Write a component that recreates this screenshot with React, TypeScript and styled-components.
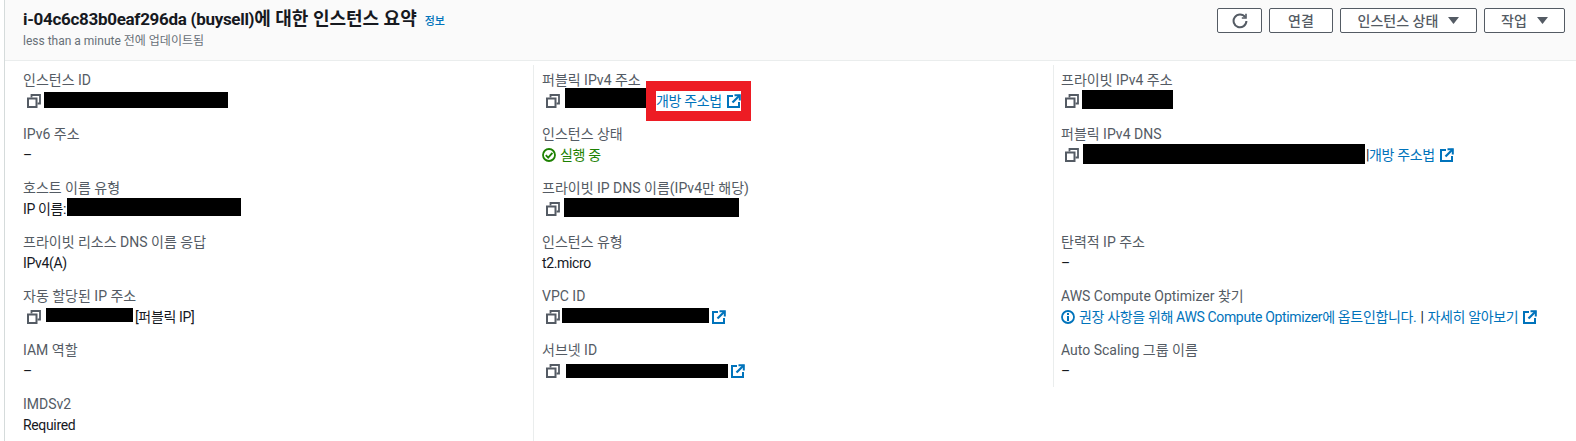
import React from 'react'
import styled, { createGlobalStyle } from 'styled-components'

const GlobalStyle = createGlobalStyle`
  html, body {
    margin: 0;
    padding: 0;
    background: #fff;
    font-family: Roboto, "Noto Sans CJK KR", sans-serif;
    font-size: 14px;
    color: #16191f;
  }
`

const CopyIcon = () => (
  <Svg_Icon width='14' height='14' viewBox='0 0 14 14' fill='none' stroke='#545b64' strokeWidth='2'>
    <rect x='1' y='4.5' width='8.5' height='8.5' />
    <path d='M4.5 3.5V1H13V9.5H10.5' strokeWidth='1.8' />
  </Svg_Icon>
)

const ExternalIcon = () => (
  <Svg_Icon width='14' height='14' viewBox='0 0 14 14' fill='none' stroke='#0073bb' strokeWidth='2'>
    <path d='M6 2H1V13H12V8' />
    <path d='M7.5 1.2H12.8V6.5' />
    <path d='M12.8 1.2L5.5 8.5' strokeWidth='2.2' />
  </Svg_Icon>
)

const RefreshIcon = () => (
  <svg width='16' height='16' viewBox='0 0 16 16' fill='none' stroke='#545b64' strokeWidth='2'>
    <path d='M13.2 4.2A6.4 6.4 0 1 0 14.4 8' />
    <path d='M14 0.8V5H9.8' strokeWidth='1.6' />
  </svg>
)

const Caret = () => (
  <svg width='11' height='7' viewBox='0 0 11 7' fill='#545b64'>
    <path d='M0 0H11L5.5 7Z' />
  </svg>
)

const CheckCircleIcon = () => (
  <Svg_Icon width='14' height='14' viewBox='0 0 14 14' fill='none' stroke='#1d8102' strokeWidth='1.8'>
    <circle cx='7' cy='7' r='6' />
    <path d='M3.8 7.2L6.2 9.6L10.4 4.8' />
  </Svg_Icon>
)

const InfoIcon = () => (
  <Svg_Icon width='14' height='14' viewBox='0 0 14 14' fill='none' stroke='#0073bb' strokeWidth='1.8'>
    <circle cx='7' cy='7' r='6' />
    <path d='M7 6V11M7 3V5' strokeWidth='2' />
  </Svg_Icon>
)

export default function App() {
  return (
    <Div_Page>
      <GlobalStyle />
      <Header_Bar>
        <div>
          <Div_TitleRow>
            <H1_Title>
              <Span_TitleId>i-04c6c83b0eaf296da (buysell)</Span_TitleId>에 대한 인스턴스 요약
            </H1_Title>
            <A_Info>정보</A_Info>
          </Div_TitleRow>
          <P_Updated>less than a minute 전에 업데이트됨</P_Updated>
        </div>
        <Div_Actions>
          <Button_Action $width={45}>
            <RefreshIcon />
          </Button_Action>
          <Button_Action $width={64}>연결</Button_Action>
          <Button_Action $width={137}>
            인스턴스 상태
            <Caret />
          </Button_Action>
          <Button_Action $width={81}>
            작업
            <Caret />
          </Button_Action>
        </Div_Actions>
      </Header_Bar>

      <Div_Columns>
        <Div_Column $divider={false} $padding={18}>
          <Div_Field>
            <Span_Label>인스턴스 ID</Span_Label>
            <Div_Value $indent={4}>
              <CopyIcon />
              <Span_Redacted $width={184} $height={16} $gap={3} $top={1} />
            </Div_Value>
          </Div_Field>
          <Div_Field>
            <Span_Label>IPv6 주소</Span_Label>
            <Div_Value>–</Div_Value>
          </Div_Field>
          <Div_Field>
            <Span_Label>호스트 이름 유형</Span_Label>
            <Div_Value>
              IP 이름:
              <Span_Redacted $width={174} $height={18} $gap={1} $top={-1} />
            </Div_Value>
          </Div_Field>
          <Div_Field>
            <Span_Label>프라이빗 리소스 DNS 이름 응답</Span_Label>
            <Div_Value>IPv4(A)</Div_Value>
          </Div_Field>
          <Div_Field>
            <Span_Label>자동 할당된 IP 주소</Span_Label>
            <Div_Value $indent={4}>
              <CopyIcon />
              <Span_Redacted $width={87} $height={14} $gap={5} $top={1} />
              <Span_Text $gap={2}>[퍼블릭 IP]</Span_Text>
            </Div_Value>
          </Div_Field>
          <Div_Field>
            <Span_Label>IAM 역할</Span_Label>
            <Div_Value>–</Div_Value>
          </Div_Field>
          <Div_Field>
            <Span_Label>IMDSv2</Span_Label>
            <Div_Value>Required</Div_Value>
          </Div_Field>
        </Div_Column>

        <Div_Column $divider $padding={8}>
          <Div_Field>
            <Span_Label>퍼블릭 IPv4 주소</Span_Label>
            <Div_Value $indent={4}>
              <CopyIcon />
              <Span_Redacted $width={81} $height={20} $gap={5} $top={-3} />
              <Div_Highlight>
                <A_Link>개방 주소법</A_Link>
                <ExternalIcon />
              </Div_Highlight>
            </Div_Value>
          </Div_Field>
          <Div_Field>
            <Span_Label>인스턴스 상태</Span_Label>
            <Div_Status>
              <CheckCircleIcon />
              실행 중
            </Div_Status>
          </Div_Field>
          <Div_Field>
            <Span_Label>프라이빗 IP DNS 이름(IPv4만 해당)</Span_Label>
            <Div_Value $indent={4}>
              <CopyIcon />
              <Span_Redacted $width={175} $height={19} $gap={4} $top={-1} />
            </Div_Value>
          </Div_Field>
          <Div_Field>
            <Span_Label>인스턴스 유형</Span_Label>
            <Div_Value>t2.micro</Div_Value>
          </Div_Field>
          <Div_Field>
            <Span_Label>VPC ID</Span_Label>
            <Div_Value $indent={4}>
              <CopyIcon />
              <Span_Redacted $width={147} $height={15} $gap={2} $top={1} />
              <Span_LinkIcon>
                <ExternalIcon />
              </Span_LinkIcon>
            </Div_Value>
          </Div_Field>
          <Div_Field>
            <Span_Label>서브넷 ID</Span_Label>
            <Div_Value $indent={4}>
              <CopyIcon />
              <Span_Redacted $width={162} $height={14} $gap={6} $top={3} />
              <Span_LinkIcon>
                <ExternalIcon />
              </Span_LinkIcon>
            </Div_Value>
          </Div_Field>
        </Div_Column>

        <Div_Column $divider $padding={7} $short>
          <Div_Field>
            <Span_Label>프라이빗 IPv4 주소</Span_Label>
            <Div_Value $indent={4}>
              <CopyIcon />
              <Span_Redacted $width={91} $height={19} $gap={3} $top={-1} />
            </Div_Value>
          </Div_Field>
          <Div_Field>
            <Span_Label>퍼블릭 IPv4 DNS</Span_Label>
            <Div_Value $indent={4}>
              <CopyIcon />
              <Span_Redacted $width={282} $height={20} $gap={4} $top={-1} />
              <Span_Text $gap={1}>|</Span_Text>
              <A_Link>개방 주소법</A_Link>
              <Span_LinkIcon $gap={5}>
                <ExternalIcon />
              </Span_LinkIcon>
            </Div_Value>
          </Div_Field>
          <Div_Field $empty />
          <Div_Field>
            <Span_Label>탄력적 IP 주소</Span_Label>
            <Div_Value>–</Div_Value>
          </Div_Field>
          <Div_Field>
            <Span_Label>AWS Compute Optimizer 찾기</Span_Label>
            <Div_Value>
              <InfoIcon />
              <A_Link $gap={4}>권장 사항을 위해 AWS Compute Optimizer에 옵트인합니다.</A_Link>
              <Span_Text $gap={4}>|</Span_Text>
              <A_Link $gap={4}>자세히 알아보기</A_Link>
              <Span_LinkIcon $gap={5}>
                <ExternalIcon />
              </Span_LinkIcon>
            </Div_Value>
          </Div_Field>
          <Div_Field>
            <Span_Label>Auto Scaling 그룹 이름</Span_Label>
            <Div_Value>–</Div_Value>
          </Div_Field>
        </Div_Column>
      </Div_Columns>
    </Div_Page>
  )
}

const Div_Page = styled.div`
  height: 100vh;
  margin-left: 4px;
  border-left: 1px solid #d5dbdb;
  display: flex;
  flex-direction: column;
  box-sizing: border-box;
  overflow: hidden;
`

const Header_Bar = styled.header`
  height: 61px;
  flex: none;
  box-sizing: border-box;
  background: #fafafa;
  border-bottom: 1px solid #eaeded;
  padding: 8px 11px 0 18px;
  display: flex;
  justify-content: space-between;
  align-items: flex-start;
`

const Div_TitleRow = styled.div`
  display: flex;
  align-items: baseline;
  gap: 8px;
  margin-top: 1px;
`

const H1_Title = styled.h1`
  margin: 0;
  font-size: 18px;
  line-height: 20px;
  font-weight: 700;
  color: #16191f;
`

const Span_TitleId = styled.span`
  font-size: 17px;
  letter-spacing: -0.3px;
`

const A_Info = styled.a`
  font-size: 11px;
  font-weight: 500;
  color: #0073bb;
`

const P_Updated = styled.p`
  margin: 4px 0 0;
  font-size: 12px;
  line-height: 16px;
  color: #687078;
`

const Div_Actions = styled.div`
  display: flex;
  gap: 7px;
`

const Button_Action = styled.button<{ $width: number }>`
  width: ${(p) => p.$width}px;
  height: 25px;
  box-sizing: border-box;
  padding: 0;
  display: flex;
  align-items: center;
  justify-content: center;
  gap: 10px;
  background: #fff;
  border: 1px solid #545b64;
  border-radius: 2px;
  font: inherit;
  font-weight: 500;
  line-height: 20px;
  color: #545b64;
`

const Div_Columns = styled.main`
  flex: 1;
  display: grid;
  grid-template-columns: 528px 520px 1fr;
  padding-top: 4px;
`

const Div_Column = styled.section<{ $divider: boolean; $padding: number; $short?: boolean }>`
  display: flex;
  flex-direction: column;
  gap: 14px;
  padding: 6px 0 6px ${(p) => p.$padding}px;
  border-left: ${(p) => (p.$divider ? '1px solid #eaeded' : 'none')};
  align-self: ${(p) => (p.$short ? 'start' : 'stretch')};
`

const Div_Field = styled.div<{ $empty?: boolean }>`
  height: 40px;
  flex: none;
  visibility: ${(p) => (p.$empty ? 'hidden' : 'visible')};
`

const Span_Label = styled.span`
  display: block;
  height: 20px;
  line-height: 18px;
  color: #545b64;
  white-space: nowrap;
`

const Div_Value = styled.div<{ $indent?: number }>`
  height: 20px;
  line-height: 20px;
  display: flex;
  align-items: center;
  white-space: nowrap;
  letter-spacing: -0.35px;
  padding-left: ${(p) => p.$indent ?? 0}px;
`

const Div_Status = styled(Div_Value)`
  color: #1d8102;
  gap: 4px;
`

const Svg_Icon = styled.svg`
  flex: none;
`

const Span_Redacted = styled.span<{ $width: number; $height: number; $gap: number; $top: number }>`
  display: block;
  flex: none;
  align-self: flex-start;
  width: ${(p) => p.$width}px;
  height: ${(p) => p.$height}px;
  margin: ${(p) => p.$top}px 0 0 ${(p) => p.$gap}px;
  background: #000;
`

const Span_Text = styled.span<{ $gap?: number }>`
  margin-left: ${(p) => p.$gap ?? 0}px;
`

const A_Link = styled.a<{ $gap?: number }>`
  color: #0073bb;
  margin-left: ${(p) => p.$gap ?? 0}px;
`

const Span_LinkIcon = styled.span<{ $gap?: number }>`
  display: flex;
  margin-left: ${(p) => p.$gap ?? 3}px;
`

const Div_Highlight = styled.div`
  display: flex;
  align-items: center;
  gap: 5px;
  height: 20px;
  background: #fff;
  border: 10px solid #ed1c24;
  margin: -10px 0;
`
